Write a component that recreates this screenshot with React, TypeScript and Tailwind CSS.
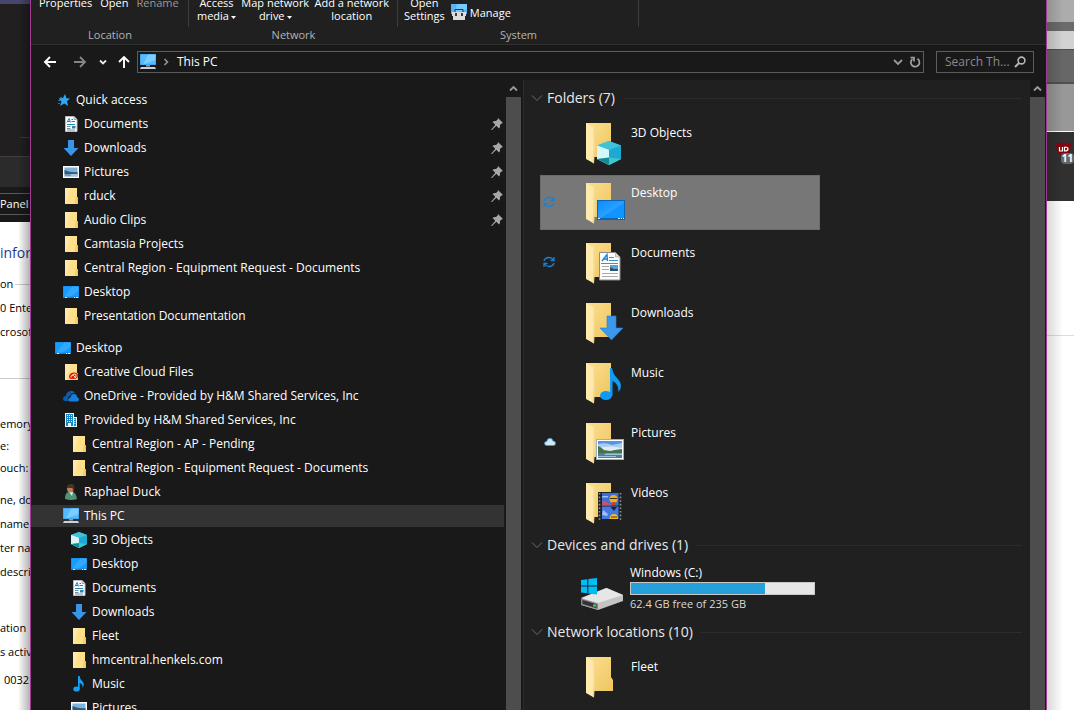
import React from "react";

type Kind =
  | "star" | "doc" | "down" | "pic" | "folder" | "desktop" | "creative" | "onedrive"
  | "building" | "person" | "pc" | "cube" | "music" | "video" | "drive";

function Cube() {
  return (
    <g>
      <path d="M8 0 16 3 16 12 8 16 0 12 0 3Z" fill="#36bfdc" />
      <path d="M8 0 16 3 8 6 0 3Z" fill="#3fc3d8" />
      <path d="M0 3 8 6 8 16 0 12Z" fill="#a9ecf5" />
      <path d="M0 3 8 6 8 11 0 12Z" fill="#d5f7fa" />
      <path d="M8 6 16 3 16 12 8 16Z" fill="#1ea9d3" />
      <path d="M8 11 16 12 8 16Z" fill="#3cc7cf" />
      <path d="M8 11 0 12 8 16Z" fill="#138b94" />
    </g>
  );
}

function Scene() {
  return (
    <g>
      <rect width="28" height="21" fill="#9fb0bd" />
      <rect x="1" y="1" width="26" height="19" fill="#fff" />
      <rect x="2" y="2" width="24" height="17" fill="#5b93e0" />
      <path d="M2 5Q10 3 16 6L26 4V13H2Z" fill="#a9cdf0" />
      <path d="M2 9Q14 6 26 9V13H2Z" fill="#dcecf6" />
      <path d="M2 7Q5 8 8 11L14 12 19 11 26 10V14H2Z" fill="#48724f" />
      <rect x="2" y="14" width="24" height="5" fill="#4f7f9f" />
      <path d="M10 14.500H26V16H8ZM2 17H20V18H2Z" fill="#9cc4da" />
    </g>
  );
}

function SmallIcon({ kind }: { kind: Kind }) {
  return (
    <svg className="size-4 shrink-0" viewBox="0 0 16 16" aria-hidden="true">
      {kind === "star" && (
        <g>
          <path d="M10 2 11.500 6.200 15 6.500 12 9.300 13 14 9.300 11.500 5 14 6.500 9.500 3.500 6.500 8 6Z" fill="#2ea8f5" />
          <path d="M5 5.500H7M3 8.500H6M3 11.500H5" stroke="#1875b8" />
        </g>
      )}
      {(kind === "folder" || kind === "creative") && (
        <g>
          <path d="M2 0H14V9H15V16H2Z" fill="#ffe08a" />
          <path d="M2 0H8L3 16H2Z" fill="#ffe9a8" />
          <path d="M13 9H15V16H12.500V12Z" fill="#edbd43" />
          <path d="M13.500 10H14.300V16H13.500Z" fill="#ffdf80" />
        </g>
      )}
      {kind === "creative" && (
        <g fill="none" stroke="#d9230f" strokeWidth="1.500">
          <path d="M6 13Q6 9 10 8.500 15.500 8 15 12 14 15.500 10 15 6 15.500 6 13Z" fill="#d9230f" stroke="none" />
          <path d="M8 13.500Q7.500 11 10 11L13 14M9 11.500Q11 9 13 10.500 14 13 11.500 13.500" stroke="#ffd9ae" strokeWidth="1" />
        </g>
      )}
      {kind === "doc" && (
        <g>
          <path d="M2.500.500H11L14 3.500V15.500H2.500Z" fill="#fff" stroke="#b8bec2" />
          <path d="M11 .500V3.500H14" fill="#ddd" stroke="#aaa" />
          <path d="M4 6.500 6 2.500 7.500 6.500M4.500 5.500H7M8.500 3.500H10M8.500 5.500H12" stroke="#2185b8" fill="none" />
          <path d="M4 8.500H12" stroke="#1a8bb5" />
          <path d="M4 10.500H7.500M4 12.500H7.500M4 14H12" stroke="#789" />
          <rect x="9" y="10" width="3.500" height="2.500" fill="#3f799f" />
        </g>
      )}
      {kind === "down" && <path d="M5 0H11V8H15.500L8 16 .500 8H5Z" fill="#3b95e6" />}
      {kind === "pic" && (
        <g>
          <rect y="2" width="16" height="12" fill="#fff" />
          <rect x="1.500" y="3.500" width="13" height="9" fill="#7db4dd" />
          <path d="M1.500 6Q8 9 14.500 8V10.500H1.500Z" fill="#31597b" />
          <path d="M1.500 10H14.500V12.500H1.500Z" fill="#a6c8dc" />
          <path d="M2 11H8" stroke="#416d89" />
        </g>
      )}
      {kind === "desktop" && (
        <g>
          <rect y="2" width="16" height="12" fill="#1680d8" />
          <path d="M.500 2.500H15.500V12.500H.500Z" fill="#179dff" />
          <path d="M9 2.500H15.500V7L8 12.500H2Z" fill="#33a8ff" />
          <path d="M2 13.500H4M11 13.500H12M13 13.500H15" stroke="#d8efff" />
        </g>
      )}
      {kind === "onedrive" && (
        <g>
          <path d="M0 11Q0 8 3 8 3 4 7 3 10 2 12 5 8 5 7 8 4 9 5 13H2Q0 13 0 11Z" fill="#0a5cad" />
          <path d="M5.500 13Q4.500 10 7.500 9.500 8 6 11 6 14 6 14 9 16 9.500 16 11.500 16 13.500 14 13.500H7Z" fill="#1480dc" />
        </g>
      )}
      {kind === "building" && (
        <g>
          <path d="M2 1H11V5H14V15H3V15H2Z" fill="#e6f6ff" />
          <path d="M3 2H10V14H3ZM11 6H13V14H11Z" fill="#1387c4" />
          <path d="M4.500 3V10M6.500 3V10M8.500 3V10M11.800 7V13" stroke="#e9f8ff" strokeDasharray="1 1" />
          <path d="M5 11H8V15H5Z" fill="#e6f6ff" />
        </g>
      )}
      {kind === "person" && (
        <g>
          <path d="M2 15Q2 8 6 8H9Q13 8 14 15Q8 17 2 15Z" fill="#4f9275" />
          <path d="M6 8H10L9 12Z" fill="#e6efe9" />
          <circle cx="7.500" cy="5" r="3.500" fill="#b97f5a" />
          <path d="M4 4Q4 0 8 0 12 0 11.500 5L10 8 9.500 4Z" fill="#4b3327" />
        </g>
      )}
      {kind === "pc" && (
        <g>
          <rect y="0" width="16" height="11" fill="#3794d8" />
          <rect x=".500" y=".500" width="15" height="10" fill="#55bbff" />
          <path d="M8 .500H15.500V6L3 10.500Z" fill="#7bceff" />
          <path d="M6 11H10V12.500H6Z" fill="#8ca0ad" />
          <path d="M1 13H15L16 15H0Z" fill="#c6d2dc" />
        </g>
      )}
      {kind === "cube" && <Cube />}
      {kind === "music" && (
        <g fill="#14a0f5">
          <ellipse cx="5.500" cy="13" rx="3.200" ry="2.600" />
          <path d="M7 0H8.700Q9 4 11.500 5.500 14 8 11.500 12 12 8 8.700 7V13H7Z" />
        </g>
      )}
    </svg>
  );
}

function LargeIcon({ kind }: { kind: Kind }) {
  if (kind === "drive") {
    return (
      <svg className="size-12 shrink-0" viewBox="0 0 48 48" aria-hidden="true">
        <path d="M2 33 28 22 44 29V35L19 44 2 39Z" fill="#c4c4c4" />
        <path d="M2 32 27 22 44 29 19 37Z" fill="#e6e6e6" />
        <path d="M2 32.500 19 37.500V43.500L2 38.500Z" fill="#858585" />
        <path d="M3.500 34 17.500 38.300V42L3.500 38Z" fill="#333" />
        <path d="M14 38.500H17V40.500H14Z" fill="#3ddc52" />
        <g fill="#00bdf5">
          <path d="M2 14 8.300 13.200V19.600H2Z" />
          <path d="M9.300 13 18 12V19.600H9.300Z" />
          <path d="M2 20.600H8.300V27.200L2 26.400Z" />
          <path d="M9.300 20.600H18V28.600L9.300 27.400Z" />
        </g>
      </svg>
    );
  }
  return (
    <svg className="size-12 shrink-0" viewBox="0 0 48 48" aria-hidden="true">
      <defs>
        <linearGradient id={"back-" + kind} x1="0" y1="0" x2="1" y2="1">
          <stop offset="0" stopColor="#fbe090" />
          <stop offset="1" stopColor="#efc55f" />
        </linearGradient>
        <linearGradient id={"screen-" + kind} x1="0" y1="0" x2="1" y2="1">
          <stop offset="0" stopColor="#0a8cff" />
          <stop offset=".55" stopColor="#2ba0ff" />
          <stop offset=".56" stopColor="#1294ff" />
          <stop offset="1" stopColor="#0d96ff" />
        </linearGradient>
      </defs>
      <path d={kind === "folder" ? "M7 4H32V24L34 27V38H7Z" : "M7 4H32V38H7Z"} fill={"url(#back-" + kind + ")"} />
      <path d="M7 4 15.500 9V32L15 44.500 7 40Z" fill="#ffe9ac" />
      <path d="M15.500 9V32L15 44.500 13.500 43.600 14.500 30V8.500Z" fill="#f6d585" />
      {kind === "cube" && (
        <g transform="translate(18 22) scale(1.500)">
          <Cube />
        </g>
      )}
      {kind === "desktop" && (
        <g>
          <rect x="18" y="21" width="28" height="20" fill="#0a66b5" />
          <rect x="19" y="22" width="26" height="17" fill="url(#screen-desktop)" />
          <path d="M19 39.500H21M39 39.500H41M42 39.500H43M44 39.500H45" stroke="#e7f5ff" />
        </g>
      )}
      {kind === "doc" && (
        <g>
          <path d="M20.500 13.500H36.500L41 18V41H20.500Z" fill="#fdfdfd" stroke="#8c8c8c" />
          <path d="M36.500 13.500V18H41Z" fill="#d8d8d8" stroke="#999" strokeWidth=".6" />
          <path d="M23 22 28 15.500 28.500 22M24.500 20H28.500" fill="none" stroke="#1d86cf" strokeWidth="1.400" />
          <path d="M30 18.500H35M30 21.500H39M22 24.500H39" stroke="#3296d4" />
          <path d="M23 27.500H30M23 30.500H30M23 34.500H39M23 37.500H39" stroke="#aaa" />
          <rect x="31" y="26" width="8" height="6" fill="#5fa0d0" />
          <path d="M31 28 35 30H39V32H31Z" fill="#2a536a" />
        </g>
      )}
      {kind === "down" && <path d="M28 17H37V29H44L32.500 41 21 29H28Z" fill="#3d97ea" stroke="#2781d3" strokeWidth=".6" />}
      {kind === "music" && (
        <g fill="#0f9bf5">
          <ellipse cx="27" cy="36.500" rx="6" ry="4.500" />
          <path d="M31 9H33Q34 15 38 19 45 26 39.500 33 40 25 33.500 22V37H31Z" />
        </g>
      )}
      {kind === "pic" && (
        <g transform="translate(17 20)">
          <Scene />
        </g>
      )}
      {kind === "video" && (
        <g>
          <rect x="19" y="13" width="24" height="28" fill="#222" />
          <path d="M20.500 14V41M41.500 14V41" stroke="#8c948e" strokeWidth="1.600" strokeDasharray="1.600 2" />
          <rect x="23" y="14" width="16.500" height="12.500" fill="#3c6fdb" />
          <rect x="23" y="27.500" width="16.500" height="12.500" fill="#4479e2" />
          <path d="M23 22Q26 21 29 24L33 26.500H23Z" fill="#c65272" />
          <path d="M23 17H29V18.500H23ZM24 31 29 35 28 37 23 36Z" fill="#9ebdf5" />
          <circle cx="34.500" cy="20" r="4" fill="#e8b51d" />
          <path d="M31 19.500H38" stroke="#4b2b1d" />
          <path d="M33 23H36.500V26H33Z" fill="#c9451e" />
          <path d="M31.500 28H38L35 32Z" fill="#17243d" />
          <path d="M30.500 40Q31 35 35 35 39 35 39 40Z" fill="#efc224" />
          <path d="M32 38H38" stroke="#6a2a1c" />
        </g>
      )}
    </svg>
  );
}

function Pin() {
  return (
    <svg className="ml-auto mr-px size-3 shrink-0" viewBox="0 0 12 12" aria-label="Pinned">
      <path d="M7 0 12 5 10.500 5.500 9 7Q9.500 9 8 10.500L5.300 7.800 1 12 0 11.800 4.300 6.800 1.500 4Q3 2.500 5 3L6.700 1.500Z" fill="#a2a8ac" />
    </svg>
  );
}

function ScrollBar({ name }: { name: string }) {
  return (
    <div className="flex w-[15px] shrink-0 flex-col bg-[#191919]">
      <button aria-label={"Scroll " + name + " up"} className="flex h-[17px] items-center justify-center">
        <svg className="size-[9px]" viewBox="0 0 9 9">
          <path d="M1 6.500 4.500 3 8 6.500" stroke="#9a9a9a" strokeWidth="1.800" fill="none" />
        </svg>
      </button>
      <div className="flex-1 bg-[#4d4d4d]" />
    </div>
  );
}

type NavItem = { label: string; kind: Kind; level: 0 | 1 | 2; pinned?: boolean; current?: boolean };
const indents = ["pl-6", "pl-8", "pl-10"];

const quickAccess: NavItem[] = [
  { label: "Quick access", kind: "star", level: 0 },
  { label: "Documents", kind: "doc", level: 1, pinned: true },
  { label: "Downloads", kind: "down", level: 1, pinned: true },
  { label: "Pictures", kind: "pic", level: 1, pinned: true },
  { label: "rduck", kind: "folder", level: 1, pinned: true },
  { label: "Audio Clips", kind: "folder", level: 1, pinned: true },
  { label: "Camtasia Projects", kind: "folder", level: 1 },
  { label: "Central Region - Equipment Request - Documents", kind: "folder", level: 1 },
  { label: "Desktop", kind: "desktop", level: 1 },
  { label: "Presentation Documentation", kind: "folder", level: 1 },
];

const desktopTree: NavItem[] = [
  { label: "Desktop", kind: "desktop", level: 0 },
  { label: "Creative Cloud Files", kind: "creative", level: 1 },
  { label: "OneDrive - Provided by H&M Shared Services, Inc", kind: "onedrive", level: 1 },
  { label: "Provided by H&M Shared Services, Inc", kind: "building", level: 1 },
  { label: "Central Region - AP - Pending", kind: "folder", level: 2 },
  { label: "Central Region - Equipment Request - Documents", kind: "folder", level: 2 },
  { label: "Raphael Duck", kind: "person", level: 1 },
  { label: "This PC", kind: "pc", level: 1, current: true },
  { label: "3D Objects", kind: "cube", level: 2 },
  { label: "Desktop", kind: "desktop", level: 2 },
  { label: "Documents", kind: "doc", level: 2 },
  { label: "Downloads", kind: "down", level: 2 },
  { label: "Fleet", kind: "folder", level: 2 },
  { label: "hmcentral.henkels.com", kind: "folder", level: 2 },
  { label: "Music", kind: "music", level: 2 },
  { label: "Pictures", kind: "pic", level: 2 },
];

function NavList({ items }: { items: NavItem[] }) {
  return (
    <ul className="flex flex-col gap-0.5">
      {items.map((item, i) => (
        <li key={i}>
          <button
            className={`flex h-[22px] w-full items-center gap-[5px] text-left whitespace-nowrap ${
              indents[item.level]
            } ${item.current ? "bg-[#333333]" : ""}`}
          >
            <SmallIcon kind={item.kind} />
            <span>{item.label}</span>
            {item.pinned && <Pin />}
          </button>
        </li>
      ))}
    </ul>
  );
}

type Status = "sync" | "cloud";
const folders: { label: string; kind: Kind; status?: Status; selected?: boolean }[] = [
  { label: "3D Objects", kind: "cube" },
  { label: "Desktop", kind: "desktop", status: "sync", selected: true },
  { label: "Documents", kind: "doc", status: "sync" },
  { label: "Downloads", kind: "down" },
  { label: "Music", kind: "music" },
  { label: "Pictures", kind: "pic", status: "cloud" },
  { label: "Videos", kind: "video" },
];

function StatusIcon({ status }: { status?: Status }) {
  return (
    <span className="w-[38px] shrink-0 pt-5 pl-0.5">
      {status === "sync" && (
        <svg className="size-3" viewBox="0 0 12 12" aria-label="Syncing">
          <path d="M1 5Q2 1.500 6 1.500 9 1.500 10.500 4M11 1V4.500H7.500M11 7Q10 10.500 6 10.500 3 10.500 1.500 8M1 11V7.500H4.500" fill="none" stroke="#1f80d0" strokeWidth="1.300" />
        </svg>
      )}
      {status === "cloud" && (
        <svg className="ml-px size-3" viewBox="0 0 12 12" aria-label="Online only">
          <path d="M2.500 9.500Q.500 9 .500 7.500 .500 5.500 2.800 5.300 3.500 2.300 6 2.300 8.500 2.300 9 5 11.500 5 11.500 7.300 11.500 9.500 9.500 9.500Z" fill="#d5e6f3" stroke="#3b9ade" strokeWidth=".9" />
        </svg>
      )}
    </span>
  );
}

function Tile({ label, kind, status, selected }: { label: string; kind: Kind; status?: Status; selected?: boolean }) {
  return (
    <button
      className={`flex h-[55px] w-[280px] items-start border text-left ${
        selected ? "border-[#6b6b6b] bg-[#777777]" : "border-transparent"
      }`}
    >
      <StatusIcon status={status} />
      <span className="pt-[3px]">
        <LargeIcon kind={kind} />
      </span>
      <span className="pt-[9px] pl-1 leading-4">{label}</span>
    </button>
  );
}

function Section({ title, children }: { title: string; children: React.ReactNode }) {
  return (
    <section className="flex flex-col gap-[7px]">
      <h2 className="flex h-5 items-center text-sm whitespace-nowrap text-[#e8e8e8]">
        <svg className="mr-1 size-3 shrink-0" viewBox="0 0 12 12" aria-hidden="true">
          <path d="M1 3.500 6 8.500 11 3.500" stroke="#6e6e6e" fill="none" />
        </svg>
        {title}
        <span className="ml-2 h-px flex-1 bg-[#2c2c2c]" />
      </h2>
      <div className="flex flex-col gap-[5px] pl-[9px]">{children}</div>
    </section>
  );
}

function Caret() {
  return (
    <svg className="ml-0.5 inline-block h-[3px] w-[5px] align-middle" viewBox="0 0 5 3" aria-hidden="true">
      <path d="M0 0H5L2.500 3Z" fill="#fff" />
    </svg>
  );
}

function RibbonGroup({ label, className, children }: { label: string; className: string; children: React.ReactNode }) {
  return (
    <div className={`flex shrink-0 flex-col ${className}`}>
      <div className="flex h-[27px] items-start border-r border-[#3d3d3d]">{children}</div>
      <div className="text-center leading-4 text-[#b4b4b4]">{label}</div>
    </div>
  );
}

function BehindLeft() {
  return (
    <aside className="relative w-[30px] shrink-0 overflow-hidden bg-white text-[11px] whitespace-nowrap text-black">
      <div className="h-1 bg-[#47466f]" />
      <div className="flex h-[152px] flex-col items-end bg-[#211f20] pt-[133px]">
        <div className="h-px w-2.5 bg-[#3a3a3a]" />
      </div>
      <div className="h-[31px] border-t border-[#414141] bg-[#2b2b2b]" />
      <div className="h-[35px] bg-[#191919] pt-1.5">
        <div className="h-[22px] border-y border-[#5a5a5a] leading-5 text-white">Panel</div>
      </div>
      <div className="flex flex-col">
        <p className="mt-5 text-sm leading-[22px] text-[#1c3a94]">infor</p>
        <p className="mt-3 flex items-center leading-4">
          on<span className="ml-0.5 h-px flex-1 bg-[#ccc]" />
        </p>
        <p className="mt-2 leading-4">0 Ente</p>
        <p className="mt-2 leading-4">crosof</p>
        <hr className="mt-[38px] border-[#ccc]" />
        <p className="mt-[37px] leading-4">emory</p>
        <p className="mt-1.5 leading-4">e:</p>
        <p className="mt-1.5 leading-4">ouch:</p>
        <p className="mt-4 leading-4">ne, do</p>
        <p className="mt-2 leading-4">name</p>
        <p className="mt-2 leading-4">ter na</p>
        <p className="mt-2 leading-4">descri</p>
        <p className="mt-10 leading-4">ation</p>
        <p className="mt-2 leading-4">s activ</p>
        <p className="mt-3 pl-1 leading-4">0032</p>
      </div>
      <div className="pointer-events-none absolute inset-y-0 right-0 w-3 bg-linear-to-r from-transparent to-black/30" />
    </aside>
  );
}

function BehindRight() {
  return (
    <aside className="relative w-[27px] shrink-0 overflow-hidden bg-white">
      <div className="h-[22px] bg-[#acacac]" />
      <div className="h-[9px] bg-[#6b6b6b]" />
      <div className="h-[18px] bg-[#d2d2d2]" />
      <div className="h-[35px] border-t border-b-2 border-[#505050] bg-[#676767]" />
      <div className="h-[48px] border-b border-white bg-[#989898]" />
      <div className="relative h-[69px] bg-[#303030] pt-2.5 pl-[9px]">
        <svg className="h-4 w-[15px]" viewBox="0 0 15 16" aria-hidden="true">
          <path d="M7.500 0Q10 2 15 1.500 15.500 11 7.500 16 -.500 11 0 1.500 5 2 7.500 0Z" fill="#800610" />
          <path d="M3.500 5V9H6.500V5M8.500 5V9Q12 9 12 7 12 5 8.500 5" fill="none" stroke="#fff" strokeWidth="1.200" />
        </svg>
        <span className="absolute top-[21px] right-0 w-[13px] rounded-sm bg-[#666] text-center text-[10px] leading-[11px] font-bold text-white">11</span>
      </div>
      <div className="h-[135px] border-b border-[#ddd]" />
      <div className="pointer-events-none absolute inset-y-0 left-0 w-4 bg-linear-to-r from-black/15 to-transparent" />
    </aside>
  );
}

export default function App() {
  return (
    <div className="flex h-screen overflow-hidden bg-[#191919] font-['Open_Sans','Noto_Sans',sans-serif] text-xs text-white">
      <BehindLeft />
      <main className="flex min-w-0 flex-1 flex-col border-x border-[#a03a96]">
        <header className="flex h-[45px] shrink-0 overflow-hidden border-b border-[#303030] bg-[#202020] text-[11px] whitespace-nowrap">
          <RibbonGroup label="Location" className="w-[158px]">
            <div className="-mt-[5px] flex gap-2 pl-2 leading-4">
              <button>Properties</button>
              <button>Open</button>
              <button className="text-[#9a9a9a]">Rename</button>
            </div>
          </RibbonGroup>
          <RibbonGroup label="Network" className="w-[209px]">
            <div className="-mt-1 flex flex-1 justify-between px-2 leading-[13px]">
              <button>Access<br />media<Caret /></button>
              <button>Map network<br />drive<Caret /></button>
              <button>Add a network<br />location</button>
            </div>
          </RibbonGroup>
          <RibbonGroup label="System" className="w-[241px]">
            <div className="-mt-1 flex gap-1.5 pl-1.5 leading-[13px]">
              <button>Open<br />Settings</button>
              <button className="flex items-center gap-[3px] pt-1.5">
                <svg className="size-4" viewBox="0 0 16 16" aria-hidden="true">
                  <rect width="16" height="10" fill="#52b5fa" />
                  <path d="M6 0H16V5L3 10Z" fill="#75c9ff" />
                  <path d="M4 8V5.500H12V8" stroke="#234" fill="none" />
                  <path d="M1 8H15V12H14V16H2V12H1Z" fill="#d9dde0" />
                  <path d="M4 9H6V12H4ZM10 9H12V12H10Z" fill="#394047" />
                </svg>
                Manage
              </button>
            </div>
          </RibbonGroup>
        </header>

        <div className="flex h-[35px] shrink-0 items-center px-3 pb-px">
          <button aria-label="Back">
            <svg className="size-3.5" viewBox="0 0 14 14"><path d="M13 7H2M7 2 2 7 7 12" fill="none" stroke="#fff" strokeWidth="1.900" /></svg>
          </button>
          <button aria-label="Forward" className="ml-4">
            <svg className="size-3.5" viewBox="0 0 14 14"><path d="M1 7H12M7 2 12 7 7 12" fill="none" stroke="#858585" strokeWidth="1.800" /></svg>
          </button>
          <button aria-label="Recent locations" className="ml-3">
            <svg className="size-2" viewBox="0 0 8 8"><path d="M1 2.500 4 5.500 7 2.500" fill="none" stroke="#e8e8e8" strokeWidth="1.800" /></svg>
          </button>
          <button aria-label="Up" className="ml-2.5">
            <svg className="size-3.5" viewBox="0 0 14 14"><path d="M7 13V2M2 7 7 2 12 7" fill="none" stroke="#fff" strokeWidth="1.900" /></svg>
          </button>
          <div className="ml-1.5 flex h-[22px] min-w-0 flex-1 items-center border border-[#5c5c5c] pr-0.5 pl-0.5">
            <SmallIcon kind="pc" />
            <svg className="ml-1.5 size-2" viewBox="0 0 8 8" aria-hidden="true"><path d="M2.500 1 5.500 4 2.500 7" fill="none" stroke="#999" strokeWidth="1.500" /></svg>
            <button className="ml-[7px]">This PC</button>
            <button aria-label="Previous locations" className="ml-auto">
              <svg className="size-2.5" viewBox="0 0 10 10"><path d="M1 3 5 7 9 3" fill="none" stroke="#999" strokeWidth="1.800" /></svg>
            </button>
            <button aria-label="Refresh" className="ml-1.5">
              <svg className="size-3" viewBox="0 0 12 12"><path d="M8.500 2.800A4.300 4.300 0 1 1 3.500 3M1.500 1.500H5V5.500" fill="none" stroke="#a2a2a2" strokeWidth="1.700" /></svg>
            </button>
          </div>
          <label className="ml-3 flex h-[22px] w-[98px] items-center border border-[#5c5c5c] pl-2">
            <input aria-label="Search This PC" placeholder="Search Th..." className="w-[67px] bg-transparent outline-none placeholder:text-[#8a8a8a]" />
            <svg className="ml-0.5 size-3" viewBox="0 0 12 12" aria-hidden="true"><circle cx="7.500" cy="4.500" r="3.400" fill="none" stroke="#b5b5b5" strokeWidth="1.600" /><path d="M5 7 1 11" stroke="#b5b5b5" strokeWidth="2" /></svg>
          </label>
        </div>

        <div className="flex min-h-0 flex-1">
          <nav className="flex w-[475px] shrink-0 flex-col gap-2.5 overflow-hidden pt-[9px] pr-0.5">
            <NavList items={quickAccess} />
            <NavList items={desktopTree} />
          </nav>
          <ScrollBar name="navigation" />
          <div className="ml-0.5 flex min-w-0 flex-1 border-l border-[#2b2b2b] bg-[#202020]">
            <div className="flex min-w-0 flex-1 flex-col gap-[5px] overflow-hidden pt-2 pr-2 pl-[7px]">
              <Section title="Folders (7)">
                {folders.map((f) => (
                  <Tile key={f.label} {...f} />
                ))}
              </Section>
              <Section title="Devices and drives (1)">
                <button className="flex h-[55px] w-[280px] items-start border border-transparent text-left">
                  <StatusIcon />
                  <span className="pt-[3px]">
                    <LargeIcon kind="drive" />
                  </span>
                  <span className="flex flex-1 flex-col gap-px pt-0.5 pl-[3px] leading-4">
                    <span>Windows (C:)</span>
                    <span className="flex h-[13px] w-[185px] border border-[#c8c8c8] bg-[#e6e6e6]">
                      <span className="w-[73%] bg-[#26a0da]" />
                    </span>
                    <span className="text-[11px] text-[#d8d8d8]">62.4 GB free of 235 GB</span>
                  </span>
                </button>
              </Section>
              <Section title="Network locations (10)">
                <Tile label="Fleet" kind="folder" />
              </Section>
            </div>
            <ScrollBar name="content" />
            <div className="w-px bg-[#191919]" />
          </div>
        </div>
      </main>
      <BehindRight />
    </div>
  );
}
